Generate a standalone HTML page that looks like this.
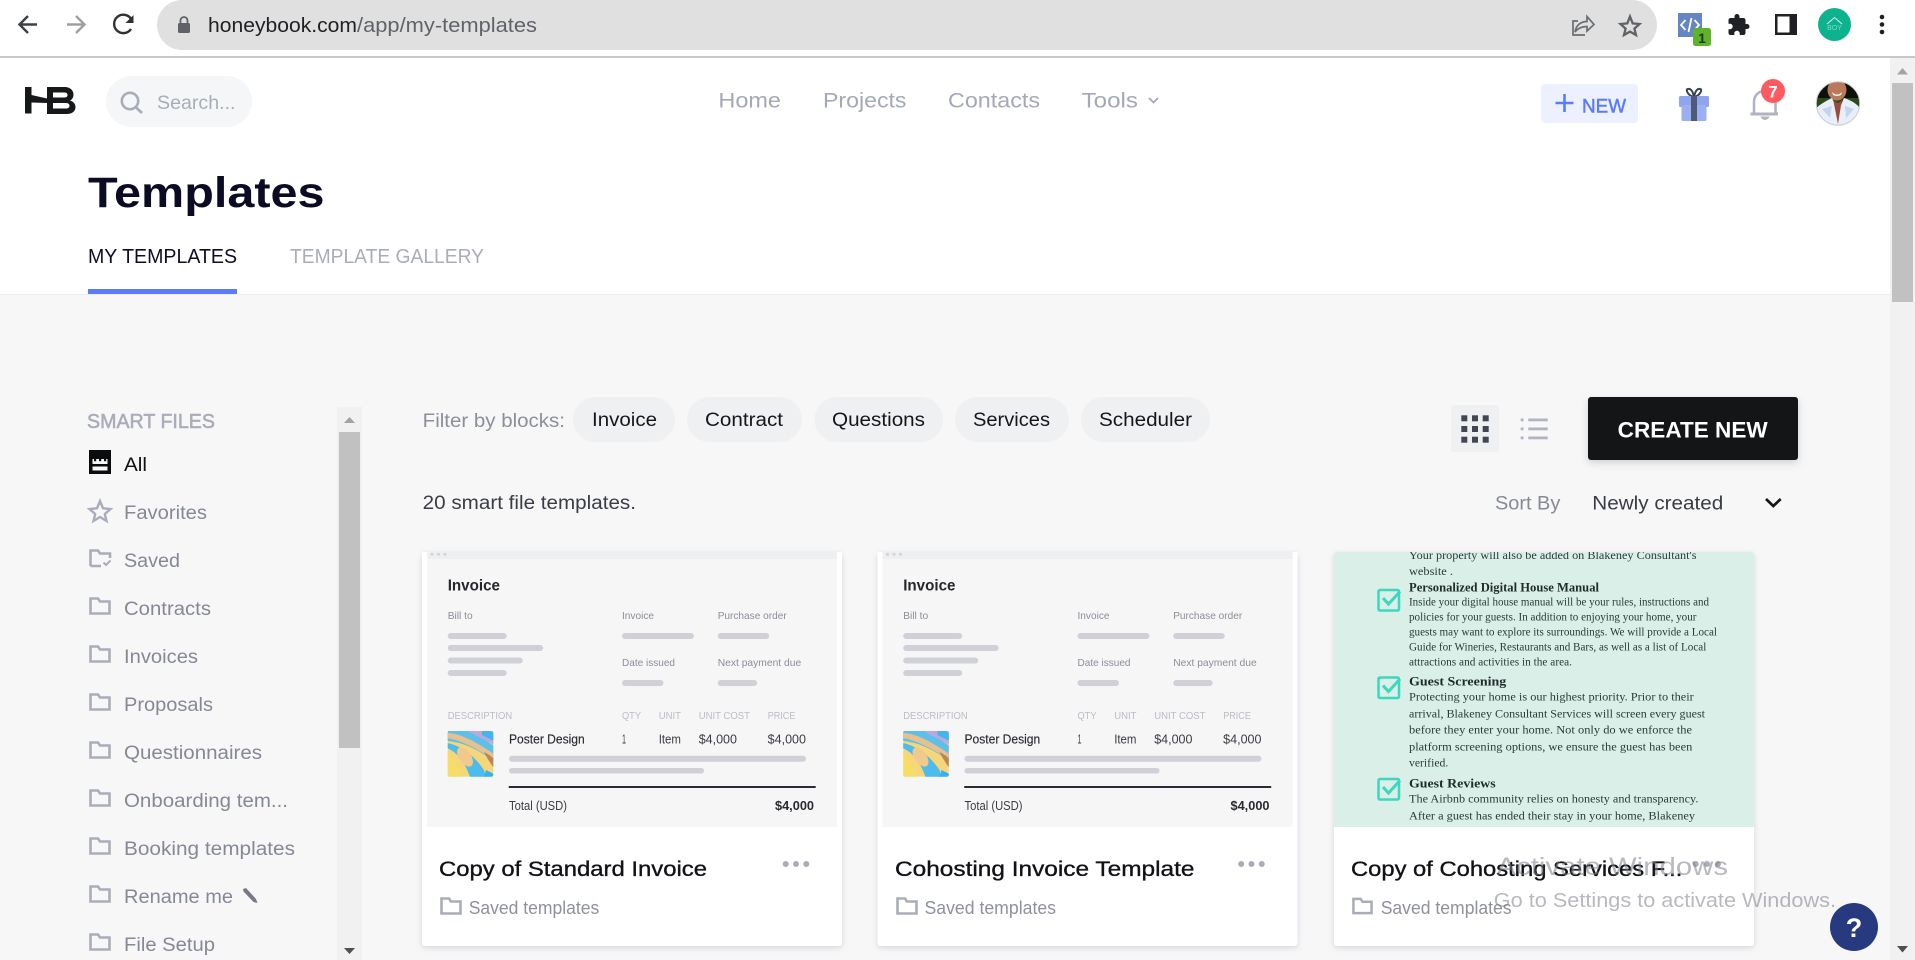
<!DOCTYPE html>
<html lang="en"><head><meta charset="utf-8"><title>Templates - HoneyBook</title>
<style>
html,body{margin:0;padding:0;width:1915px;height:960px;overflow:hidden;background:#f7f7f8}
svg{display:block}
text{font-family:"Liberation Sans",sans-serif;white-space:pre}
.s{font-family:"Liberation Serif",serif;fill:#2b3a38;font-size:11.5px}
.sb{font-family:"Liberation Serif",serif;fill:#1e2b29;font-size:13px;font-weight:bold}
.nav{font-size:21.5px;fill:#a4a9b7}
.side{font-size:19px;fill:#858995}
.pill{font-size:19px;fill:#15151f}
.title{font-size:21.5px;fill:#111216;stroke:#111216;stroke-width:.35}
.saved{font-size:18px;fill:#8f929c}
.h{font-size:15.5px;font-weight:bold;fill:#26272c}
.l{font-size:10.5px;fill:#8c8e96}
.c{font-size:10.5px;fill:#babdc5}
.v{font-size:12.5px;fill:#3b3d44}
.b{fill:#d0d1d7}
</style></head><body>
<svg xmlns="http://www.w3.org/2000/svg" width="1915" height="960" viewBox="0 0 1915 960">
<defs>
<symbol id="folder" viewBox="0 0 22 18" overflow="visible"><path d="M1.5 1.5H9L11 4.5H20.5V16.5H1.5Z" fill="none" stroke="#a9adb8" stroke-width="2.6"/></symbol>
<clipPath id="th"><rect x="447.7" y="730.7" width="45.6" height="46" rx="2"/></clipPath>
<clipPath id="av"><circle cx="1838" cy="103.5" r="21.5"/></clipPath>
<clipPath id="c3"><rect x="1334" y="552" width="420" height="275" rx="3"/></clipPath>
<g id="invoice">
<rect x="422" y="552" width="420" height="275" fill="#fff"/>
<rect x="427" y="552" width="410" height="275" fill="#f6f6f7"/>
<rect x="427" y="552" width="410" height="7" fill="#eeeff1"/>
<circle cx="432" cy="554.3" r="1.6" fill="#d3d5da"/><circle cx="438.5" cy="554.3" r="1.6" fill="#d3d5da"/><circle cx="445" cy="554.3" r="1.6" fill="#d3d5da"/>
<text class="h" x="447.7" y="590.7" textLength="52.3" lengthAdjust="spacingAndGlyphs">Invoice</text>
<text class="l" x="447.7" y="619" textLength="25" lengthAdjust="spacingAndGlyphs">Bill to</text>
<text class="l" x="622" y="619" textLength="32" lengthAdjust="spacingAndGlyphs">Invoice</text>
<text class="l" x="717.7" y="619" textLength="69" lengthAdjust="spacingAndGlyphs">Purchase order</text>
<rect class="b" x="447.7" y="633" width="59" height="6" rx="3"/><rect class="b" x="447.7" y="645" width="95.5" height="6" rx="3"/><rect class="b" x="447.7" y="657.5" width="75" height="6" rx="3"/><rect class="b" x="447.7" y="670" width="59" height="6" rx="3"/>
<rect class="b" x="622" y="633" width="72" height="6" rx="3"/><rect class="b" x="717.7" y="633" width="51.5" height="6" rx="3"/>
<text class="l" x="622" y="666" textLength="53" lengthAdjust="spacingAndGlyphs">Date issued</text>
<text class="l" x="717.7" y="666" textLength="83.5" lengthAdjust="spacingAndGlyphs">Next payment due</text>
<rect class="b" x="622" y="680" width="41.5" height="6" rx="3"/><rect class="b" x="717.7" y="680" width="39.5" height="6" rx="3"/>
<text class="c" x="447.7" y="719" textLength="64.5" lengthAdjust="spacingAndGlyphs">DESCRIPTION</text>
<text class="c" x="622" y="719" textLength="19" lengthAdjust="spacingAndGlyphs">QTY</text>
<text class="c" x="658.7" y="719" textLength="22.3" lengthAdjust="spacingAndGlyphs">UNIT</text>
<text class="c" x="698.7" y="719" textLength="51.3" lengthAdjust="spacingAndGlyphs">UNIT COST</text>
<text class="c" x="767.7" y="719" textLength="27.7" lengthAdjust="spacingAndGlyphs">PRICE</text>
<g clip-path="url(#th)">
<rect x="447.7" y="730.7" width="45.6" height="46" fill="#f5d77a"/>
<path d="M447 731H472L494 746V762C480 750 462 742 447 741Z" fill="#5cc0ea"/>
<path d="M447 733C458 733 472 739 494 754V760C476 748 460 740 447 738Z" fill="#e6c08e"/>
<path d="M468 731H494V745C486 740 476 736 468 731Z" fill="#b9a8dc"/>
<path d="M482 731H490L494 733V741L482 735Z" fill="#43b5ee"/>
<path d="M447 743C460 745 474 755 484 770L486 777H470C466 765 458 752 447 748Z" fill="#4dbbec"/>
<ellipse cx="465" cy="757" rx="6" ry="11" transform="rotate(-35 465 757)" fill="#f0c98e"/>
<path d="M484 752C488 754 491 756 494 759V768C490 763 487 758 484 752Z" fill="#b98658"/>
<path d="M486 770L494 774V777H484Z" fill="#3ab0ee"/>
<path d="M447 750C453 758 458 767 462 777H447Z" fill="#f8dc68"/>
</g>
<text x="509" y="743.3" textLength="75.7" lengthAdjust="spacingAndGlyphs" font-size="12.5" fill="#2a2b30" stroke="#2a2b30" stroke-width=".15">Poster Design</text>
<text class="v" x="622" y="743.3" textLength="4" lengthAdjust="spacingAndGlyphs">1</text>
<text class="v" x="658.7" y="743.3" textLength="22.3" lengthAdjust="spacingAndGlyphs">Item</text>
<text class="v" x="698.7" y="743.3" textLength="38.3" lengthAdjust="spacingAndGlyphs">$4,000</text>
<text class="v" x="767.7" y="743.3" textLength="38.3" lengthAdjust="spacingAndGlyphs">$4,000</text>
<rect class="b" x="509" y="755.7" width="297" height="6" rx="3"/><rect class="b" x="509" y="768" width="195" height="5.5" rx="2.7"/>
<rect x="508.7" y="786" width="307" height="2" fill="#2a2d34"/>
<text class="v" x="509" y="810" textLength="58" lengthAdjust="spacingAndGlyphs">Total (USD)</text>
<text x="775" y="810" textLength="39" lengthAdjust="spacingAndGlyphs" font-size="12.5" font-weight="bold" fill="#2a2b30">$4,000</text>
</g>
</defs>

<!-- browser chrome -->
<rect width="1915" height="56" fill="#fff"/>
<rect y="56" width="1915" height="2" fill="#c8c8c8"/>
<path d="M37 24.5H20M28 16L19.5 24.5L28 33" fill="none" stroke="#3c4043" stroke-width="2.4"/>
<path d="M67 24.5H84M76 16L84.5 24.5L76 33" fill="none" stroke="#9d9fa3" stroke-width="2.4"/>
<path d="M131 29a9.2 9.2 0 1 1 0.4-9.5" fill="none" stroke="#2f3134" stroke-width="2.4"/><path d="M133.5 15V23H125.5Z" fill="#2f3134"/>
<rect x="157" y="0" width="1500" height="50" rx="25" fill="#e0e0e0"/>
<rect x="178" y="23" width="12" height="10" rx="1.5" fill="#5f6368"/><path d="M180.5 23V20.5a3.5 3.5 0 0 1 7 0V23" fill="none" stroke="#5f6368" stroke-width="1.8"/>
<text x="208" y="32" font-size="20.5" fill="#202124" textLength="149" lengthAdjust="spacingAndGlyphs">honeybook.com</text>
<text x="357" y="32" font-size="20.5" fill="#5f6368" textLength="180" lengthAdjust="spacingAndGlyphs">/app/my-templates</text>
<path d="M1585 35H1573V21H1578M1575 32C1576 25 1581 21.5 1587 21.5V16.5L1594 24.5L1587 31V26.5C1582 26.5 1578 28 1575 32Z" fill="none" stroke="#6a6d71" stroke-width="1.7"/>
<path d="M1630 16.5L1632.7 23.4L1639.5 24L1634.4 28.6L1636 35L1630 31.6L1624 35L1625.6 28.6L1620.5 24L1627.3 23.4Z" fill="none" stroke="#5f6368" stroke-width="2.3"/>
<rect x="1678" y="13" width="24" height="24" fill="#6486c4"/>
<path d="M1685.5 20L1681 25L1685.5 30M1694.5 20L1699 25L1694.5 30M1691.5 18L1688.5 32" fill="none" stroke="#fff" stroke-width="1.8"/>
<rect x="1693" y="28" width="18" height="18" rx="2.5" fill="#5fb32a"/>
<text x="1702" y="43" font-size="14" font-weight="bold" fill="#1f3a10" text-anchor="middle">1</text>
<g transform="translate(1726.5 13)"><path d="M20.5 11H19V7c0-1.1-.9-2-2-2h-4V3.5C13 2.12 11.88 1 10.5 1S8 2.12 8 3.5V5H4c-1.1 0-1.99.9-1.99 2v3.8H3.500c1.49 0 2.7 1.21 2.7 2.7s-1.21 2.7-2.7 2.7H2V20c0 1.1.9 2 2 2h3.8v-1.5c0-1.49 1.21-2.7 2.7-2.7 1.49 0 2.7 1.21 2.7 2.7V22H17c1.1 0 2-.9 2-2v-4h1.5c1.38 0 2.5-1.12 2.5-2.5S21.88 11 20.5 11z" fill="#202124"/></g>
<rect x="1775" y="14" width="22" height="21" fill="#202124"/><rect x="1777.500" y="16.500" width="12" height="16" fill="#fff"/>
<circle cx="1834.5" cy="24.5" r="16.5" fill="#0db28e"/>
<path d="M1827 24L1834.5 17.5L1842 24" fill="none" stroke="#d8f3ec" stroke-width="1"/>
<text x="1834.5" y="30" font-size="7" fill="#7fdcc6" text-anchor="middle">BOY</text>
<circle cx="1882" cy="17" r="2.3" fill="#202124"/><circle cx="1882" cy="24.5" r="2.3" fill="#202124"/><circle cx="1882" cy="32" r="2.3" fill="#202124"/>

<!-- app header -->
<rect y="58" width="1890" height="236" fill="#fff"/>
<rect y="294" width="1890" height="1" fill="#ececee"/>
<path d="M25 87H31.5V113.5H25ZM31.5 95L47 98.5V87H64C71 87 73.5 91 73.5 94.5C73.5 97.5 72 99.5 70 100.5C73.5 101.5 75.500 104 75.5 107C75.5 111 72.5 114 66.5 114H47V103L31.5 102.5ZM53 92.5V97.5H64.5C67 97.5 67.5 96 67.5 95S67 92.5 64.500 92.5ZM53 103V108.5H66C68.5 108.5 69.5 107 69.5 105.7S68.5 103 66 103Z" fill="#17181a" fill-rule="evenodd"/>
<rect x="106" y="76" width="146" height="51" rx="25.5" fill="#f5f6f7"/>
<circle cx="130" cy="101" r="8.2" fill="none" stroke="#a9adb8" stroke-width="2.6"/><path d="M135.5 107L142 113" stroke="#a9adb8" stroke-width="2.8"/>
<text x="157" y="109" font-size="19.5" fill="#a9adb8" textLength="78.5" lengthAdjust="spacingAndGlyphs">Search...</text>
<text class="nav" x="718.4" y="107.7" textLength="62.6" lengthAdjust="spacingAndGlyphs">Home</text>
<text class="nav" x="823" y="107.7" textLength="83.5" lengthAdjust="spacingAndGlyphs">Projects</text>
<text class="nav" x="948" y="107.7" textLength="92" lengthAdjust="spacingAndGlyphs">Contacts</text>
<text class="nav" x="1081.6" y="107.7" textLength="56.4" lengthAdjust="spacingAndGlyphs">Tools</text>
<path d="M1149 98L1153.5 102.5L1158 98" fill="none" stroke="#a4a9b7" stroke-width="1.8"/>
<rect x="1541" y="84" width="97" height="39" rx="4" fill="#edf1ff"/>
<path d="M1564.5 94V112M1555.5 103H1573.5" stroke="#5a7bfa" stroke-width="2.6"/>
<text x="1582" y="112.7" font-size="19.5" fill="#5a7bfa" stroke="#5a7bfa" stroke-width=".5" textLength="44" lengthAdjust="spacingAndGlyphs">NEW</text>
<!-- gift -->
<path d="M1694 97C1688 96 1685 89 1688 89C1691 88 1693 92 1694 97C1695 92 1697 88 1700 89C1703 89 1700 96 1694 97Z" fill="none" stroke="#3b4152" stroke-width="2"/>
<rect x="1679" y="96" width="30" height="11" rx="1.5" fill="#8fa5ee"/>
<rect x="1681.5" y="105" width="25" height="16" rx="1.5" fill="#9ab0f2"/>
<rect x="1691" y="96" width="6" height="25" fill="#4e5a78"/>
<!-- bell -->
<path d="M1754 113V102C1754 95 1759 91 1765 91C1771 91 1775.5 95 1775.5 102V113" fill="none" stroke="#aeb3c0" stroke-width="2.5"/>
<path d="M1750.5 114H1778" stroke="#aeb3c0" stroke-width="3"/><path d="M1760.5 116.5H1769.5C1768 121 1762 121 1760.5 116.5Z" fill="#aeb3c0"/>
<circle cx="1773" cy="91" r="12" fill="#ff5a5f"/>
<text x="1773" y="97.5" font-size="17" font-weight="bold" fill="#fff" text-anchor="middle">7</text>
<!-- avatar -->
<g clip-path="url(#av)">
<rect x="1816" y="81" width="44" height="45" fill="#0c120a"/>
<rect x="1816" y="98" width="44" height="8" fill="#2c4a1e"/>
<ellipse cx="1837" cy="90" rx="9.5" ry="10.5" fill="#b9795a"/>
<path d="M1816 127V108C1822 103 1828 100 1832 98L1838 112L1844 98C1850 100 1856 103 1860 108V127Z" fill="#e8eff9"/>
<path d="M1822 109L1832 106L1830 118ZM1854 109L1845 106L1846 118Z" fill="#c4d5ec"/>
<path d="M1833 99L1838 124L1842 99C1840 104 1836 104 1833 99Z" fill="#9a4a3b"/>
<path d="M1832 92Q1837 97 1842 92L1841 95Q1837 97 1833 95Z" fill="#f4eee8"/>
</g>
<circle cx="1838" cy="103.5" r="21.7" fill="none" stroke="#c9ccd2" stroke-width="1"/>
<!-- Templates head -->
<text x="88" y="207" font-size="43" font-weight="bold" fill="#0b0b23" textLength="236.5" lengthAdjust="spacingAndGlyphs">Templates</text>
<text x="88" y="263" font-size="20" fill="#0d0d25" textLength="149" lengthAdjust="spacingAndGlyphs">MY TEMPLATES</text>
<text x="290" y="263" font-size="20" fill="#a9adb8" textLength="194" lengthAdjust="spacingAndGlyphs">TEMPLATE GALLERY</text>
<rect x="88" y="289" width="149" height="5" fill="#5b7bf9"/>

<!-- page scrollbar -->
<rect x="1890" y="58" width="25" height="902" fill="#f1f1f1"/>
<rect x="1892" y="83" width="21" height="219" fill="#c1c1c1"/>
<path d="M1897 74.5H1908L1902.5 68Z" fill="#a3a3a3"/><path d="M1897 946H1908L1902.5 952.5Z" fill="#505050"/>

<!-- sidebar -->
<text x="87" y="428" font-size="20" fill="#a9adb8" stroke="#a9adb8" stroke-width=".55" textLength="128" lengthAdjust="spacingAndGlyphs">SMART FILES</text>
<rect x="89" y="450" width="22" height="24" fill="#0b0c0e"/>
<rect x="92.5" y="453" width="15" height="17.5" fill="#f7f7f8"/>
<rect x="92.5" y="453" width="15" height="6" fill="#0b0c0e"/>
<rect x="94" y="459" width="2.2" height="2.2" fill="#0b0c0e"/><rect x="99" y="459" width="2.2" height="2.2" fill="#0b0c0e"/><rect x="104" y="459" width="2.2" height="2.2" fill="#0b0c0e"/>
<rect x="92.5" y="464" width="15" height="2.5" fill="#0b0c0e"/>
<text x="124" y="471" font-size="19.5" fill="#101114" textLength="23" lengthAdjust="spacingAndGlyphs">All</text>
<path d="M100 501L103 508.3L110.5 509L104.8 514L106.5 521L100 517L93.5 521L95.2 514L89.5 509L97 508.3Z" fill="none" stroke="#a9adb8" stroke-width="2.4"/>
<text class="side" x="124" y="519" textLength="83" lengthAdjust="spacingAndGlyphs">Favorites</text>
<path d="M90.5 566V550.5H98L100 553.5H110V558M101 566H90.5" fill="none" stroke="#a9adb8" stroke-width="2.6"/><path d="M103.5 562.5L106 565L110.5 560.5" fill="none" stroke="#a9adb8" stroke-width="2"/>
<text class="side" x="124" y="567" textLength="56" lengthAdjust="spacingAndGlyphs">Saved</text>
<use href="#folder" x="89" y="597" width="22" height="18"/><text class="side" x="124" y="615" textLength="87" lengthAdjust="spacingAndGlyphs">Contracts</text>
<use href="#folder" x="89" y="645" width="22" height="18"/><text class="side" x="124" y="663" textLength="74" lengthAdjust="spacingAndGlyphs">Invoices</text>
<use href="#folder" x="89" y="693" width="22" height="18"/><text class="side" x="124" y="711" textLength="89" lengthAdjust="spacingAndGlyphs">Proposals</text>
<use href="#folder" x="89" y="741" width="22" height="18"/><text class="side" x="124" y="759" textLength="138" lengthAdjust="spacingAndGlyphs">Questionnaires</text>
<use href="#folder" x="89" y="789" width="22" height="18"/><text class="side" x="124" y="807" textLength="164" lengthAdjust="spacingAndGlyphs">Onboarding tem...</text>
<use href="#folder" x="89" y="837" width="22" height="18"/><text class="side" x="124" y="855" textLength="171" lengthAdjust="spacingAndGlyphs">Booking templates</text>
<use href="#folder" x="89" y="885" width="22" height="18"/><text class="side" x="124" y="903" textLength="109" lengthAdjust="spacingAndGlyphs">Rename me</text>
<path d="M243 889L246 888L256 899L257.5 903L253.5 902L243.5 891.5Z" fill="#777a84"/>
<use href="#folder" x="89" y="933" width="22" height="18"/><text class="side" x="124" y="951" textLength="91" lengthAdjust="spacingAndGlyphs">File Setup</text>
<rect x="337" y="407" width="25" height="553" fill="#f1f1f1"/>
<rect x="339" y="432" width="21" height="316" fill="#c1c1c1"/>
<path d="M344 423H355L349.5 417Z" fill="#a3a3a3"/><path d="M344 948H355L349.5 954Z" fill="#505050"/>

<!-- filters -->
<text x="422.7" y="427" font-size="19" fill="#8b8f9a" textLength="142.3" lengthAdjust="spacingAndGlyphs">Filter by blocks:</text>
<rect x="573" y="397" width="102" height="45" rx="22.5" fill="#eff0f2"/><text class="pill" x="592" y="426" textLength="65" lengthAdjust="spacingAndGlyphs">Invoice</text>
<rect x="687" y="397" width="115" height="45" rx="22.5" fill="#eff0f2"/><text class="pill" x="705" y="426" textLength="78" lengthAdjust="spacingAndGlyphs">Contract</text>
<rect x="814.6" y="397" width="128.4" height="45" rx="22.5" fill="#eff0f2"/><text class="pill" x="832" y="426" textLength="93" lengthAdjust="spacingAndGlyphs">Questions</text>
<rect x="955" y="397" width="114" height="45" rx="22.5" fill="#eff0f2"/><text class="pill" x="973" y="426" textLength="77" lengthAdjust="spacingAndGlyphs">Services</text>
<rect x="1081" y="397" width="129" height="45" rx="22.5" fill="#eff0f2"/><text class="pill" x="1099" y="426" textLength="93" lengthAdjust="spacingAndGlyphs">Scheduler</text>

<rect x="1451" y="405" width="48" height="47" rx="3" fill="#eff0f2"/>
<g fill="#414652">
<rect x="1461.3" y="415.3" width="6" height="6"/><rect x="1472" y="415.3" width="6" height="6"/><rect x="1482.7" y="415.3" width="6" height="6"/>
<rect x="1461.3" y="426" width="6" height="6"/><rect x="1472" y="426" width="6" height="6"/><rect x="1482.7" y="426" width="6" height="6"/>
<rect x="1461.3" y="436.7" width="6" height="6"/><rect x="1472" y="436.7" width="6" height="6"/><rect x="1482.7" y="436.7" width="6" height="6"/>
</g>
<g fill="#b0b4c0">
<rect x="1520.7" y="418.5" width="2.8" height="2.8"/><rect x="1528.3" y="418.5" width="19.4" height="2.8"/>
<rect x="1520.7" y="427.5" width="2.8" height="2.8"/><rect x="1528.3" y="427.5" width="19.4" height="2.8"/>
<rect x="1520.7" y="436.5" width="2.8" height="2.8"/><rect x="1528.3" y="436.5" width="19.4" height="2.8"/>
</g>
<rect x="1588" y="397" width="210" height="63" rx="3" fill="#141517" style="filter:drop-shadow(0 3px 4px rgba(120,125,140,.3))"/>
<text x="1617.7" y="437.3" font-size="22" font-weight="bold" fill="#fff" textLength="150" lengthAdjust="spacingAndGlyphs">CREATE NEW</text>
<text x="422.7" y="509" font-size="19" fill="#3b3d45" textLength="213.3" lengthAdjust="spacingAndGlyphs">20 smart file templates.</text>
<text x="1495" y="509.3" font-size="19" fill="#868a94" textLength="65.3" lengthAdjust="spacingAndGlyphs">Sort By</text>
<text x="1592.3" y="509.3" font-size="19" fill="#3a3c44" textLength="131" lengthAdjust="spacingAndGlyphs">Newly created</text>
<path d="M1766 499L1773.3 506L1780.7 499" fill="none" stroke="#15151a" stroke-width="2.7"/>

<!-- card 1 -->
<rect x="422" y="552" width="420" height="394" rx="3" fill="#fff" style="filter:drop-shadow(0 2px 3px rgba(120,125,140,.25))"/>
<use href="#invoice"/>
<text class="title" x="439" y="876" textLength="268" lengthAdjust="spacingAndGlyphs">Copy of Standard Invoice</text>
<circle cx="785.7" cy="864" r="3" fill="#a9adb8"/><circle cx="796" cy="864" r="3" fill="#a9adb8"/><circle cx="806.3" cy="864" r="3" fill="#a9adb8"/>
<use href="#folder" x="440" y="897" width="22" height="18"/>
<text class="saved" x="468.7" y="914" textLength="130.6" lengthAdjust="spacingAndGlyphs">Saved templates</text>

<!-- card 2 -->
<rect x="877.5" y="552" width="420" height="394" rx="3" fill="#fff" style="filter:drop-shadow(0 2px 3px rgba(120,125,140,.25))"/>
<use href="#invoice" x="455.5"/>
<text class="title" x="895" y="876" textLength="299.5" lengthAdjust="spacingAndGlyphs">Cohosting Invoice Template</text>
<circle cx="1241.2" cy="864" r="3" fill="#a9adb8"/><circle cx="1251.5" cy="864" r="3" fill="#a9adb8"/><circle cx="1261.8" cy="864" r="3" fill="#a9adb8"/>
<use href="#folder" x="896" y="897" width="22" height="18"/>
<text class="saved" x="924.5" y="914" textLength="131.5" lengthAdjust="spacingAndGlyphs">Saved templates</text>

<!-- card 3 -->
<rect x="1334" y="552" width="420" height="394" rx="3" fill="#fff" style="filter:drop-shadow(0 2px 3px rgba(120,125,140,.25))"/>
<rect x="1334" y="552" width="420" height="275" rx="3" fill="#dbefe9"/>
<rect x="1334" y="820" width="420" height="7" fill="#dbefe9"/>
<g clip-path="url(#c3)">
<text class="s" x="1409" y="559" textLength="287.5" lengthAdjust="spacingAndGlyphs">Your property will also be added on Blakeney Consultant's</text>
<text class="s" x="1409" y="575" textLength="44" lengthAdjust="spacingAndGlyphs">website .</text>
<text class="sb" x="1409" y="591.7" textLength="190" lengthAdjust="spacingAndGlyphs">Personalized Digital House Manual</text>
<text class="s" x="1409" y="605.7" textLength="300" lengthAdjust="spacingAndGlyphs">Inside your digital house manual will be your rules, instructions and</text>
<text class="s" x="1409" y="620.7" textLength="287.5" lengthAdjust="spacingAndGlyphs">policies for your guests. In addition to enjoying your home, your</text>
<text class="s" x="1409" y="635.7" textLength="308" lengthAdjust="spacingAndGlyphs">guests may want to explore its surroundings. We will provide a Local</text>
<text class="s" x="1409" y="650.7" textLength="297.3" lengthAdjust="spacingAndGlyphs">Guide for Wineries, Restaurants and Bars, as well as a list of Local</text>
<text class="s" x="1409" y="665.7" textLength="163" lengthAdjust="spacingAndGlyphs">attractions and activities in the area.</text>
<text class="sb" x="1409" y="685.7" textLength="97.3" lengthAdjust="spacingAndGlyphs">Guest Screening</text>
<text class="s" x="1409" y="700.7" textLength="284.8" lengthAdjust="spacingAndGlyphs">Protecting your home is our highest priority. Prior to their</text>
<text class="s" x="1409" y="717.3" textLength="296" lengthAdjust="spacingAndGlyphs">arrival, Blakeney Consultant Services will screen every guest</text>
<text class="s" x="1409" y="733.7" textLength="283" lengthAdjust="spacingAndGlyphs">before they enter your home. Not only do we enforce the</text>
<text class="s" x="1409" y="750.3" textLength="283.3" lengthAdjust="spacingAndGlyphs">platform screening options, we ensure the guest has been</text>
<text class="s" x="1409" y="766.3" textLength="39.3" lengthAdjust="spacingAndGlyphs">verified.</text>
<text class="sb" x="1409" y="787.7" textLength="86.7" lengthAdjust="spacingAndGlyphs">Guest Reviews</text>
<text class="s" x="1409" y="802.7" textLength="289.4" lengthAdjust="spacingAndGlyphs">The Airbnb community relies on honesty and transparency.</text>
<text class="s" x="1409" y="819.3" textLength="286" lengthAdjust="spacingAndGlyphs">After a guest has ended their stay in your home, Blakeney</text>
<text class="s" x="1409" y="835" textLength="280" lengthAdjust="spacingAndGlyphs">Consultant will ask the guest for a public review and rating.</text>
</g>
<g fill="none" stroke="#3dd6bf" stroke-width="2.5">
<rect x="1378.5" y="590" width="20.5" height="20.5" rx="1.5"/><path d="M1383 598L1388.5 604L1400 591.5" stroke-width="3"/>
<rect x="1378.5" y="677.5" width="20.5" height="20.5" rx="1.5"/><path d="M1383 685.5L1388.5 691.5L1400 679" stroke-width="3"/>
<rect x="1378.5" y="779" width="20.5" height="20.5" rx="1.5"/><path d="M1383 787L1388.5 793L1400 780.5" stroke-width="3"/>
</g>
<text class="title" x="1351" y="876" textLength="331.4" lengthAdjust="spacingAndGlyphs">Copy of Cohosting Services F...</text>
<circle cx="1695.7" cy="864" r="3" fill="#a9adb8"/><circle cx="1707" cy="864" r="3" fill="#a9adb8"/><circle cx="1718" cy="864" r="3" fill="#a9adb8"/>
<use href="#folder" x="1352" y="897" width="21" height="18"/>
<text class="saved" x="1380.7" y="914" textLength="130.9" lengthAdjust="spacingAndGlyphs">Saved templates</text>

<!-- windows watermark -->
<text x="1496.5" y="875" font-size="25" fill="#7e8088" fill-opacity=".55" textLength="231.5" lengthAdjust="spacingAndGlyphs">Activate Windows</text>
<text x="1493.8" y="907" font-size="20" fill="#7e8088" fill-opacity=".55" textLength="342.2" lengthAdjust="spacingAndGlyphs">Go to Settings to activate Windows.</text>

<!-- help -->
<circle cx="1854" cy="927" r="24" fill="#27397f"/>
<text x="1854" y="937" font-size="27" font-weight="bold" fill="#fff" text-anchor="middle">?</text>
</svg>
</body></html>
